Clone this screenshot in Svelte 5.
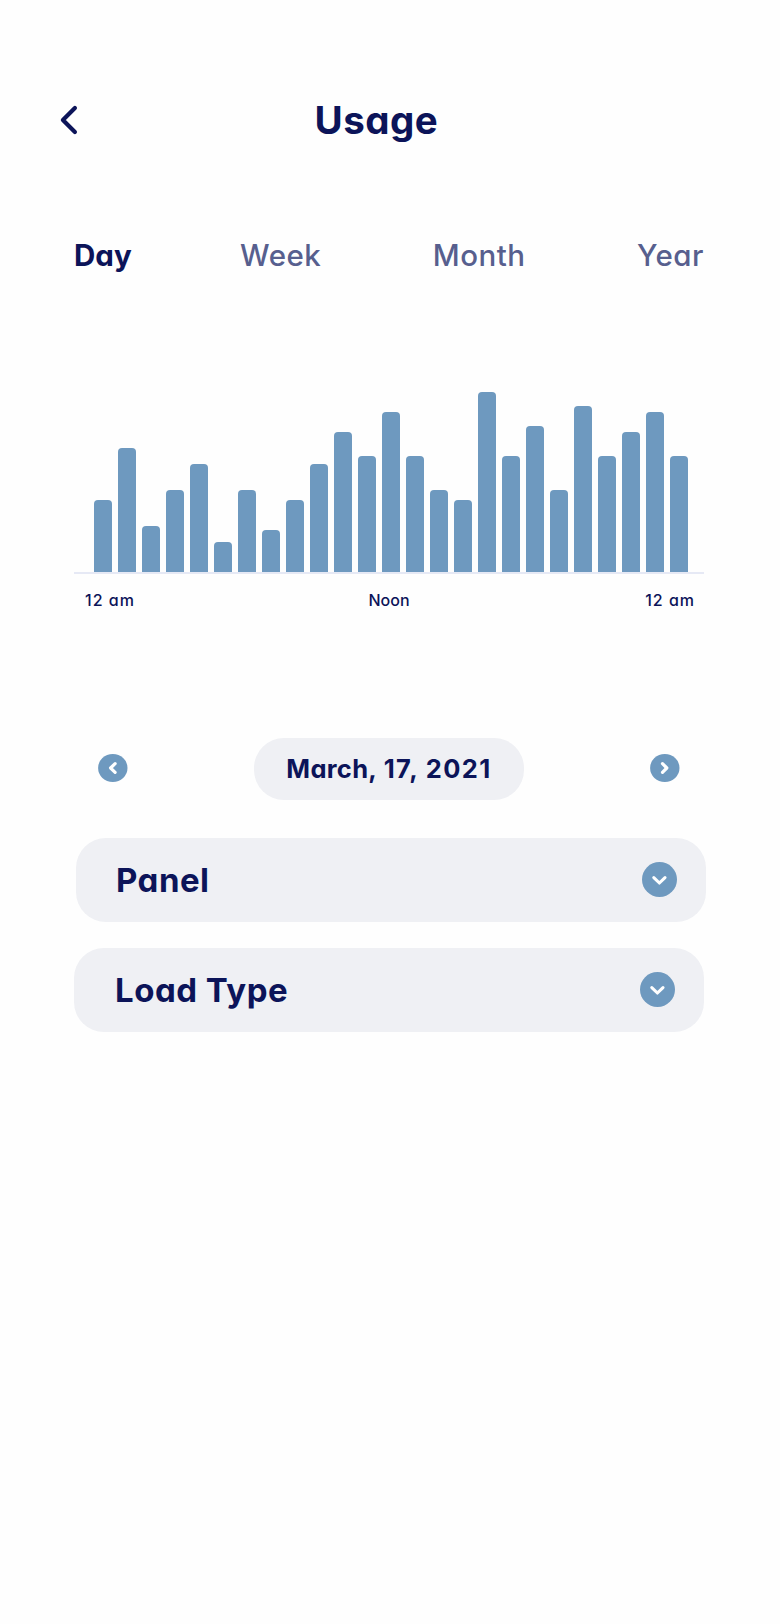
<script>
  let active = $state('Day');
  const tabs = ['Day', 'Week', 'Month', 'Year'];
  const usage = [
    72, 124, 46, 82, 108, 30, 82, 42, 72, 108, 140, 116, 160,
    116, 82, 72, 180, 116, 146, 82, 166, 116, 140, 160, 116
  ];
</script>

<main class="screen">
  <header>
    <button class="back" aria-label="Back">
      <svg width="20" height="32" viewBox="0 0 20 32">
        <path d="M15.9 4 3.9 16l12 12" fill="none" stroke="#0c1459" stroke-width="4.2" stroke-linecap="round" stroke-linejoin="round" />
      </svg>
    </button>
    <h1>Usage</h1>
  </header>

  <nav>
    {#each tabs as tab}
      <button class="tab {tab.toLowerCase()}" class:active={active === tab} onclick={() => (active = tab)}>{tab}</button>
    {/each}
  </nav>

  <section class="chart">
    <div class="bars">
      {#each usage as value}
        <div class="bar" style="height: {value}px"></div>
      {/each}
    </div>
    <div class="axis">
      <span class="hour">12 am</span>
      <span class="noon">Noon</span>
      <span class="hour">12 am</span>
    </div>
  </section>

  <section class="date-row">
    <button aria-label="Previous day">
      <svg width="30" height="28" viewBox="0 0 30 28">
        <ellipse cx="14.8" cy="14" rx="14.7" ry="14" fill="#6e99bf" />
        <path d="M17.1 9.7 12.6 14l4.5 4.3" fill="none" stroke="#fff" stroke-width="3.2" stroke-linecap="round" stroke-linejoin="round" />
      </svg>
    </button>
    <div class="date">March, <span class="digits">17, 2021</span></div>
    <button aria-label="Next day">
      <svg width="30" height="28" viewBox="0 0 30 28">
        <ellipse cx="14.8" cy="14" rx="14.7" ry="14" fill="#6e99bf" />
        <path d="M12.5 9.7 16.8 14l-4.3 4.3" fill="none" stroke="#fff" stroke-width="3.2" stroke-linecap="round" stroke-linejoin="round" />
      </svg>
    </button>
  </section>

  <section class="filters">
    {#each ['Panel', 'Load Type'] as label}
      <button class="filter" class:panel={label === 'Panel'}>
        <span>{label}</span>
        <svg width="35" height="35" viewBox="0 0 35 35">
          <circle cx="17.5" cy="17.5" r="17.5" fill="#6e99bf" />
          <path d="M11.8 15.6 17.4 21l5.6-5.4" fill="none" stroke="#fff" stroke-width="3.1" stroke-linecap="round" stroke-linejoin="round" />
        </svg>
      </button>
    {/each}
  </section>
</main>

<style>
  :global(body) {
    margin: 0;
    background: #fefefe;
  }
  .screen {
    box-sizing: border-box;
    width: 780px;
    height: 1624px;
    padding: 90px 76px 0 74px;
    background: #fefefe;
    color: #0c1459;
    font-family: Inter, 'Liberation Sans', sans-serif;
    font-feature-settings: 'cv11' 1;
  }
  button {
    margin: 0;
    padding: 0;
    border: 0;
    background: none;
    color: inherit;
    font: inherit;
    font-feature-settings: inherit;
    letter-spacing: inherit;
    cursor: pointer;
  }
  svg {
    display: block;
  }
  header {
    display: flex;
    align-items: center;
    height: 60px;
    margin-left: -15px;
  }
  h1 {
    margin: 0 0 0 235.5px;
    font-size: 38.5px;
    line-height: 60px;
    font-weight: 650;
    letter-spacing: 0.5px;
  }
  nav {
    display: flex;
    justify-content: space-between;
    height: 40px;
    margin-top: 85px;
    line-height: 40px;
    font-size: 29.5px;
    letter-spacing: 0.5px;
  }
  .tab {
    color: #575f8e;
    font-weight: 500;
  }
  .tab.active {
    color: #0c1459;
    font-weight: 700;
  }
  .day {
    margin-right: -3px;
    letter-spacing: 0;
  }
  .chart {
    margin-top: 117px;
  }
  .bars {
    display: flex;
    align-items: flex-end;
    gap: 6px;
    height: 180px;
    padding-left: 20px;
    border-bottom: 2px solid #e6e9f5;
  }
  .bar {
    width: 18px;
    border-radius: 4px 4px 0 0;
    background: #6e99bf;
  }
  .axis {
    display: flex;
    justify-content: space-between;
    height: 20px;
    margin-top: 16px;
    padding: 0 9px 0 11px;
    line-height: 20px;
    font-size: 16px;
    font-weight: 500;
  }
  .hour {
    letter-spacing: 1px;
  }
  .noon {
    margin-right: 2px;
  }
  .date-row {
    display: flex;
    align-items: center;
    justify-content: space-between;
    height: 62px;
    margin-top: 128px;
    padding: 0 24px;
  }
  .date-row svg {
    margin-bottom: 2px;
  }
  .date {
    width: 270px;
    border-radius: 30px;
    background: #eff0f4;
    line-height: 62px;
    font-size: 25.5px;
    font-weight: 650;
    letter-spacing: 0.3px;
    text-align: center;
    white-space: nowrap;
  }
  .digits {
    margin-left: 1px;
    letter-spacing: 1.4px;
  }
  .filters {
    display: flex;
    flex-direction: column;
    gap: 26px;
    margin-top: 38px;
  }
  .filter {
    display: flex;
    align-items: center;
    justify-content: space-between;
    box-sizing: border-box;
    width: 630px;
    height: 84px;
    padding: 0 29px 0 41px;
    border-radius: 30px;
    background: #eff0f4;
    font-size: 33px;
    font-weight: 650;
    letter-spacing: 0.5px;
  }
  .panel {
    margin-left: 2px;
    padding-left: 40px;
  }
  .filter svg {
    margin-bottom: 1px;
  }
</style>
